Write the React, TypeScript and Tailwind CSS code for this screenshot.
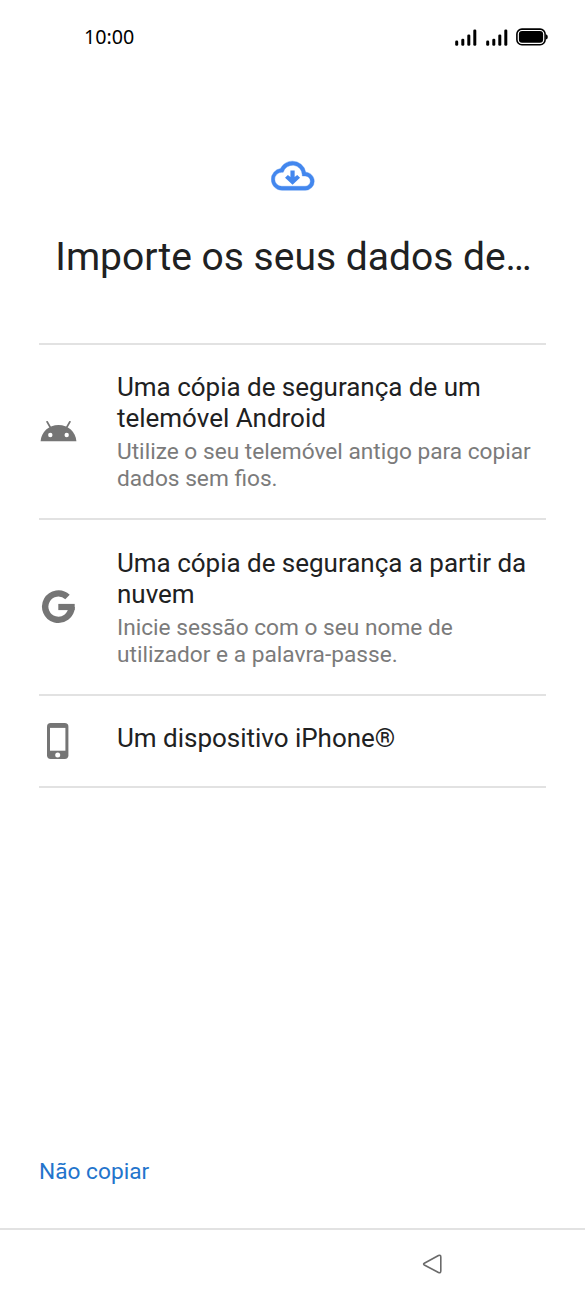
import type { ReactNode } from "react";

function Signal() {
  return (
    <svg width="22" height="17" viewBox="0 0 22 17" fill="#000">
      <rect x="0.2" y="11.6" width="3" height="5.1" rx="1.3" />
      <rect x="6.3" y="9.7" width="3" height="7" rx="1.3" />
      <rect x="12.3" y="5.5" width="3" height="11.2" rx="1.3" />
      <rect x="18.3" y="0.4" width="3" height="16.3" rx="1.3" />
    </svg>
  );
}

function Battery() {
  return (
    <svg width="32" height="18" viewBox="0 0 32 18">
      <rect x="0.9" y="1.1" width="28.2" height="15.6" rx="5" fill="none" stroke="#000" strokeWidth="1.6" />
      <rect x="2.9" y="3" width="24.2" height="11.8" rx="3.2" />
      <path d="M30 6.2Q31.8 6.8 31.8 8.9Q31.8 11 30 11.6Z" />
    </svg>
  );
}

function CloudIcon() {
  return (
    <svg className="mt-[80px] self-center" width="44" height="44" viewBox="0.25 0.2 24 24" fill="#4387ee">
      <path
        stroke="#4387ee"
        strokeWidth="0.2"
        d="M19.2 10.1A7.4 7.4 0 0 0 12 4.1C9.15 4.1 6.7 5.7 5.45 8.1A5.95 5.95 0 0 0 .4 14c0 3.3 2.6 6 5.9 6H19a4.9 4.9 0 0 0 4.85-4.95c0-2.6-2.05-4.75-4.65-4.95zM18.9 17.8H6.1a3.8 3.8 0 0 1 0-7.6h.8a5.3 5.3 0 0 1 10.4 1.35v.65h1.6a2.8 2.8 0 0 1 0 5.6z"
      />
      <path d="M10.85 9.2h2.3v3.6l1.4-1.1 1.55 1.5-4.1 3.8-4.1-3.8 1.55-1.5 1.4 1.1z" />
    </svg>
  );
}

function AndroidIcon() {
  return (
    <svg width="39" height="22" viewBox="0 0.8 39 22">
      <path d="M1.6 21C2.3 11.7 9.8 4.9 19.5 4.9S36.7 11.7 37.4 21Z" fill="#757575" />
      <path d="M8.1 1.6L11.8 8M30.9 1.6L27.2 8" stroke="#757575" strokeWidth="1.7" strokeLinecap="round" />
      <circle cx="11.3" cy="14.8" r="2.2" fill="#fff" />
      <circle cx="27.7" cy="14.8" r="2.2" fill="#fff" />
    </svg>
  );
}

function GoogleIcon() {
  return (
    <svg width="39" height="34" viewBox="0 0 39 34" fill="none" stroke="#757575" strokeWidth="6.4">
      <path d="M28.5 7.05A13.2 13.2 0 1 0 32.6 16.9" />
      <path d="M19.3 17H35.7" strokeWidth="6.2" />
    </svg>
  );
}

function PhoneIcon() {
  return (
    <svg width="39" height="38" viewBox="0 0 39 38">
      <rect x="8" y="1" width="21.4" height="36" rx="3.7" fill="#757575" />
      <rect x="11" y="5.9" width="15.4" height="22.8" fill="#fff" />
      <circle cx="18.7" cy="32.9" r="2.5" fill="#fff" />
    </svg>
  );
}

function Option({ icon, title, detail, box }: { icon: ReactNode; title: ReactNode; detail?: ReactNode; box: string }) {
  return (
    <li className={`flex items-center border-b-2 border-[#e2e2e2] ${box}`}>
      {icon}
      <div className="ml-[39px] self-start whitespace-nowrap">
        <p className="text-[26px] leading-[31px] tracking-[-0.02px]">{title}</p>
        {detail && <p className="mt-[5px] text-[22.68px] leading-[26.5px] text-[#7b7b7b]">{detail}</p>}
      </div>
    </li>
  );
}

export default function App() {
  return (
    <div className="flex h-[1300px] w-[585px] flex-col bg-white font-['Roboto',sans-serif] text-[#202122]">
      <header className="flex h-[74px] items-center justify-between pr-[37px] pl-[84px]">
        <span className="font-['Noto_Sans',sans-serif] text-[19.7px] text-black">10:00</span>
        <div className="flex items-center">
          <Signal />
          <span className="w-[8.5px]" />
          <Signal />
          <span className="w-[8.5px]" />
          <Battery />
        </div>
      </header>
      <main className="flex flex-1 flex-col px-[39px]">
        <CloudIcon />
        <h1 className="mt-[35px] pl-[2px] text-center text-[39px] leading-[48px] whitespace-nowrap">
          Importe os seus dados de…
        </h1>
        <ul className="mt-[62px] border-t-2 border-[#e2e2e2]">
          <Option
            box="h-[175px] pt-[27px] *:first:-mt-[27px]"
            icon={<AndroidIcon />}
            title={<>Uma cópia de segurança de um<br />telemóvel Android</>}
            detail={<>Utilize o seu telemóvel antigo para copiar<br />dados sem fios.</>}
          />
          <Option
            box="h-[176px] pt-[28px] *:first:-mt-[28px]"
            icon={<GoogleIcon />}
            title={<>Uma cópia de segurança a partir da<br />nuvem</>}
            detail={<>Inicie sessão com o seu nome de<br />utilizador e a palavra-passe.</>}
          />
          <Option
            box="h-[92px] pt-[27px] *:first:-mt-[27px]"
            icon={<PhoneIcon />}
            title="Um dispositivo iPhone®"
          />
        </ul>
        <button className="mt-auto mb-[42px] self-start text-[22.7px] leading-[28px] text-[#2374cc]">Não copiar</button>
      </main>
      <nav className="flex h-[72px] justify-end border-t-2 border-[#e2e2e2] pt-[24px] pr-[143px]">
        <svg width="20" height="20" viewBox="0 0 20 20" fill="none" stroke="#6a6a6a" strokeWidth="1.6" strokeLinejoin="round">
          <path d="M2.3 9.2L16.5 1.5Q18.8 .8 18.8 3V17Q18.8 19.3 16.5 18.5L2.3 11Q.9 10 2.3 9.2Z" />
        </svg>
      </nav>
    </div>
  );
}
